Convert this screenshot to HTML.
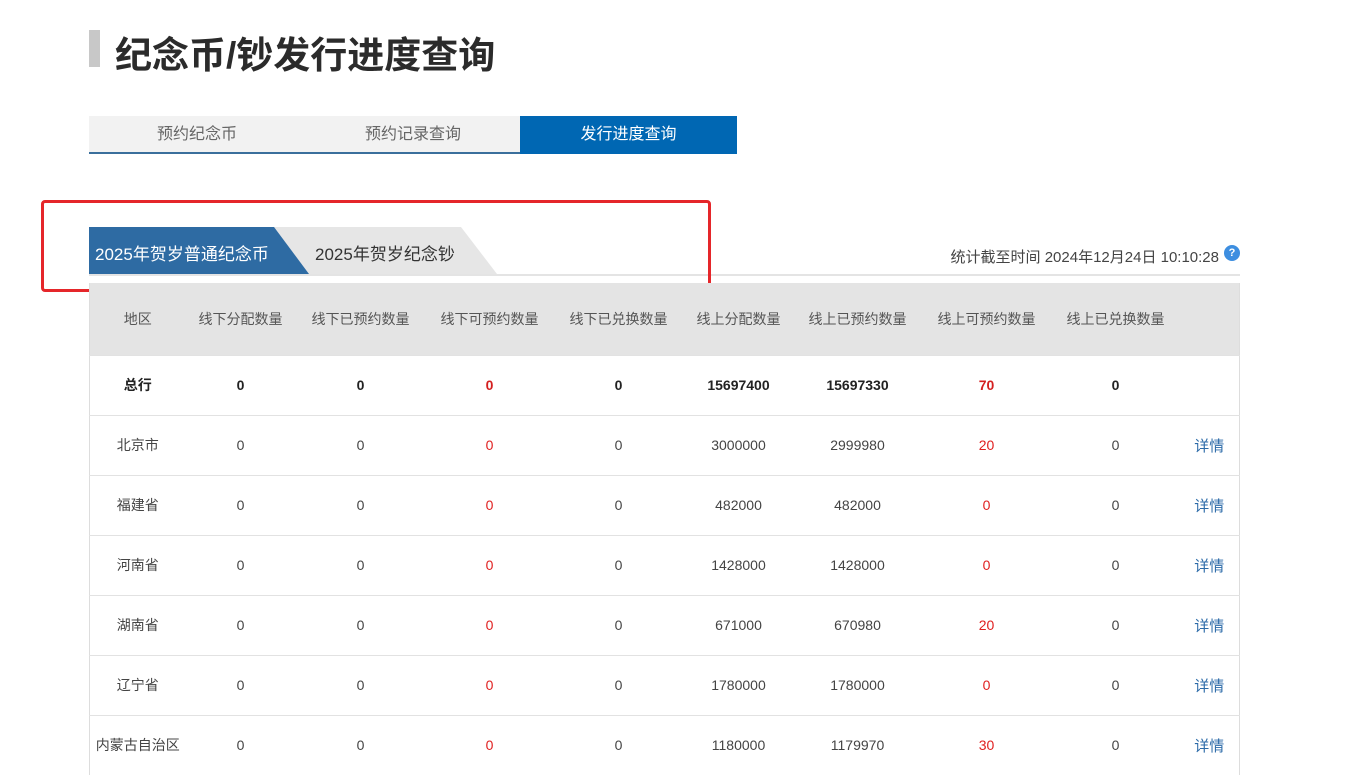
<!DOCTYPE html>
<html><head><meta charset="utf-8"><style>
*{margin:0;padding:0;box-sizing:border-box}
body{width:1356px;height:746px;overflow:hidden;background:#fff;font-family:"Liberation Sans","Noto Sans CJK SC",sans-serif;color:#333;position:relative}
.abs{position:absolute}
.title{left:115px;top:25px;font-size:37px;font-weight:bold;color:#2b2b2b}
.bar{left:89px;top:30px;width:11px;height:37px;background:#c8c8c8}
.tabs{left:89px;top:116px;width:648px;height:38px;background:#f2f2f2;border-bottom:2px solid #3a6f9c}
.tab{position:absolute;top:0;height:38px;line-height:38px;text-align:center;font-size:16px;color:#666;width:216px}
table{position:absolute;left:89px;top:283px;width:1151px;border-collapse:collapse;font-size:14px;border-left:1px solid #ddd;border-right:1px solid #ddd}
th{background:#e4e4e4;height:72px;font-weight:normal;color:#555;font-size:14px}
td{height:60px;text-align:center;border-top:1px solid #e2e2e2;color:#444}
.r{color:#e02020}
.b td{font-weight:bold;color:#222}
.b td.r{color:#d42020}
a{color:#2b6aa8;text-decoration:none;font-size:15px}
</style></head><body>
<div class="abs bar"></div>
<div class="abs title">纪念币/钞发行进度查询</div>
<div class="abs tabs">
<div class="tab" style="left:0">预约纪念币</div>
<div class="tab" style="left:216px">预约记录查询</div>
<div class="tab" style="left:431px;width:217px;background:#0067b3;color:#fff;height:38px">发行进度查询</div>
</div>
<svg class="abs" style="left:89px;top:227px" width="420" height="48">
<polygon points="160,0 372,0 408,47 160,47" fill="#e6e6e6"/>
<polygon points="0,0 185,0 220,47 0,47" fill="#2e6ba3"/>
</svg>
<div class="abs" style="left:95px;top:240px;font-size:17px;color:#fff">2025年贺岁普通纪念币</div>
<div class="abs" style="left:315px;top:240px;font-size:17px;color:#333">2025年贺岁纪念钞</div>
<div class="abs" style="left:89px;top:274px;width:1151px;height:2px;background:#e4e4e4"></div>
<div class="abs" style="left:41px;top:200px;width:670px;height:92px;border:3px solid #e5262a;border-radius:4px"></div>
<div class="abs" style="right:137px;top:246px;font-size:15px;color:#444">统计截至时间 2024年12月24日 10:10:28</div>
<div class="abs" style="left:1224px;top:245px;width:16px;height:16px;border-radius:50%;background:#3d8ee0;color:#fff;font-size:11px;font-weight:bold;text-align:center;line-height:16px">?</div>
<table>
<colgroup><col style="width:96px"><col style="width:110px"><col style="width:130px"><col style="width:128px"><col style="width:130px"><col style="width:110px"><col style="width:128px"><col style="width:130px"><col style="width:128px"><col></colgroup>
<tr><th>地区</th><th>线下分配数量</th><th>线下已预约数量</th><th>线下可预约数量</th><th>线下已兑换数量</th><th>线上分配数量</th><th>线上已预约数量</th><th>线上可预约数量</th><th>线上已兑换数量</th><th></th></tr>
<tr class="b"><td>总行</td><td>0</td><td>0</td><td class="r">0</td><td>0</td><td>15697400</td><td>15697330</td><td class="r">70</td><td>0</td><td></td></tr>
<tr><td>北京市</td><td>0</td><td>0</td><td class="r">0</td><td>0</td><td>3000000</td><td>2999980</td><td class="r">20</td><td>0</td><td><a>详情</a></td></tr>
<tr><td>福建省</td><td>0</td><td>0</td><td class="r">0</td><td>0</td><td>482000</td><td>482000</td><td class="r">0</td><td>0</td><td><a>详情</a></td></tr>
<tr><td>河南省</td><td>0</td><td>0</td><td class="r">0</td><td>0</td><td>1428000</td><td>1428000</td><td class="r">0</td><td>0</td><td><a>详情</a></td></tr>
<tr><td>湖南省</td><td>0</td><td>0</td><td class="r">0</td><td>0</td><td>671000</td><td>670980</td><td class="r">20</td><td>0</td><td><a>详情</a></td></tr>
<tr><td>辽宁省</td><td>0</td><td>0</td><td class="r">0</td><td>0</td><td>1780000</td><td>1780000</td><td class="r">0</td><td>0</td><td><a>详情</a></td></tr>
<tr><td>内蒙古自治区</td><td>0</td><td>0</td><td class="r">0</td><td>0</td><td>1180000</td><td>1179970</td><td class="r">30</td><td>0</td><td><a>详情</a></td></tr>
</table>
</body></html>
